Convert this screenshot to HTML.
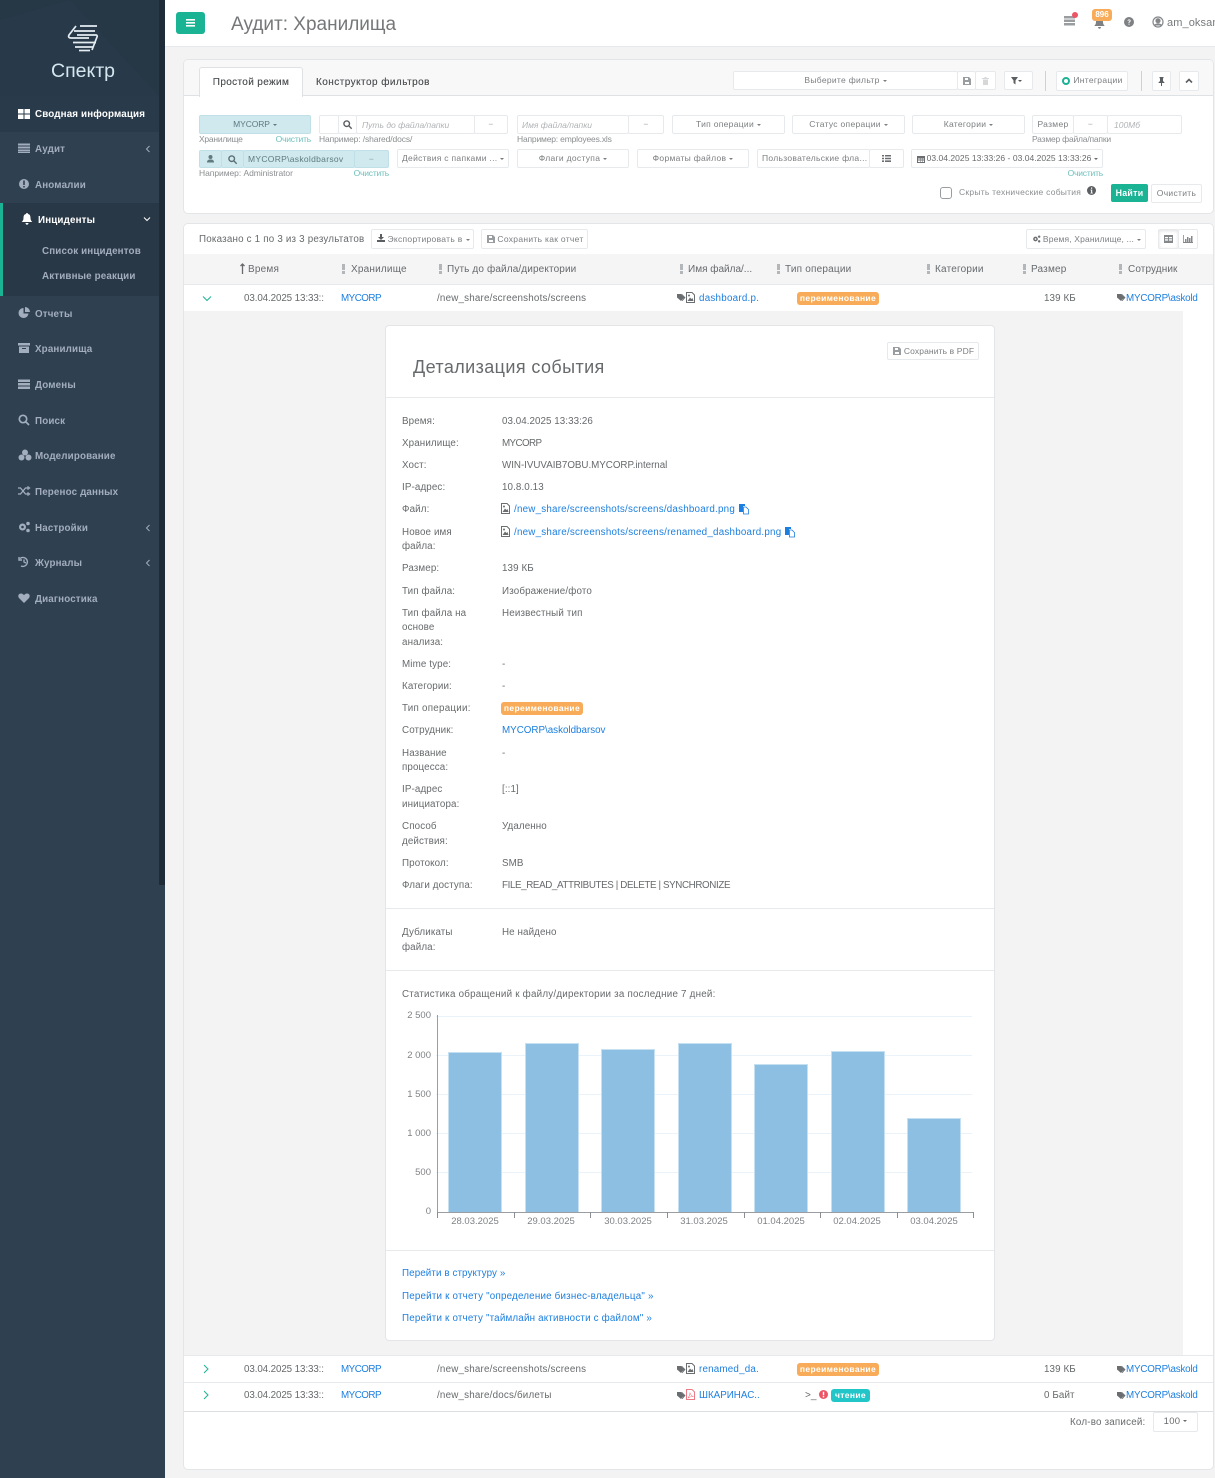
<!DOCTYPE html>
<html lang="ru"><head><meta charset="utf-8"><title>Аудит: Хранилища</title>
<style>
*{box-sizing:border-box}
html,body{margin:0;padding:0}
body{width:1215px;height:1478px;position:relative;overflow:hidden;background:#f3f3f4;font-family:"Liberation Sans",sans-serif;font-size:10px;color:#676a6c}
.t{position:absolute;white-space:nowrap;line-height:14px;height:14px;margin-top:1px}
.b{position:absolute}
.s{font-size:8.5px;letter-spacing:-.12px;color:#8b8e90;margin-top:0}
.c{text-align:center}
.r{text-align:right}
.box{position:absolute;background:#fff;border:1px solid #e7eaec;border-radius:2px;color:#7b7e80;font-size:8.5px;letter-spacing:.3px;line-height:16px;text-align:center;white-space:nowrap;overflow:hidden}
.tl{background:#cfe9ee;border-color:#bfe0e6;color:#5f7a80}
.nav{position:absolute;left:35px;font-weight:bold;font-size:9.8px;letter-spacing:.15px;line-height:14px;color:#a2adbe;white-space:nowrap;margin-top:1px}
.ni{position:absolute;left:18px;width:12px;height:12px;fill:#a2adbe}
.ch{position:absolute;left:145px;width:6px;height:8px;fill:none;stroke:#a2adbe;stroke-width:1}
.car:after{content:"";display:inline-block;border:2px solid transparent;border-top:2.5px solid currentColor;border-bottom:0;margin-left:3px;vertical-align:middle}
.pl{font-style:italic;color:#b0b3b5;letter-spacing:0;line-height:18px}
.h{font-size:10px;letter-spacing:.2px;color:#676a6c;margin-top:2px}
.sd{position:absolute;width:3px;height:10px;top:264px;background:linear-gradient(#b4b7b9 0 6px,transparent 6px 7px,#b4b7b9 7px 10px)}
.d{font-size:9.8px;letter-spacing:.12px;color:#676a6c;margin-top:2px}
.l{color:#1c7fe0}
.bd{position:absolute;border-radius:3px;color:#fff;font-weight:bold;font-size:8.5px;letter-spacing:.35px;line-height:13px;height:13px;text-align:center}
.v{font-size:9.8px;letter-spacing:.1px;margin-top:2px}
.ic{position:absolute;fill:#6b6e70}
.ax{font-size:9.5px;color:#7f8285;letter-spacing:0;margin-top:2px}
.x0{margin-top:0}
svg{display:block;overflow:visible}
</style></head><body>

<!-- SIDEBAR -->
<div class="b" style="left:0;top:0;width:165px;height:1478px;background:#2f4050"></div>
<div class="b" style="left:0;top:0;width:159px;height:96px;background:#263746"></div>
<svg class="b" style="left:0;top:0" width="159" height="96"><polygon points="0,20 70,0 159,96 0,96" fill="#283a4a"/></svg>
<div class="b" style="left:0;top:96px;width:159px;height:36px;background:#293a4a"></div>
<div class="b" style="left:0;top:132px;width:159px;height:71px;background:#2f4050"></div>
<div class="b" style="left:0;top:203px;width:159px;height:93px;background:#293846"></div>
<div class="b" style="left:0;top:203px;width:3px;height:93px;background:#1ab394"></div>
<div class="b" style="left:159px;top:0;width:6px;height:885px;background:#1f2c38"></div>
<svg class="b" style="left:67px;top:24px" width="32" height="28" fill="none" stroke="#e4ecf1" stroke-width="1.7"><path d="M13 2H30"/><path d="M9 2 2 11c-1 2 0 3 2 3"/><path d="M7 7H28"/><path d="M4 14H22"/><path d="M6 18.500H29"/><path d="M8 23H26"/><path d="M12 26.500H23"/><path d="M10 11H29c1 0 1.500 1 1 2l-5 13"/></svg>
<div class="t x0" style="left:51px;top:60px;height:23px;line-height:23px;font-size:19.500px;color:#d6e6ef">Спектр</div>

<svg class="ni" style="top:108px;fill:#fff" viewBox="0 0 12 12"><path d="M0 1h5.500v4.500H0zM6.500 1H12v4.500H6.500zM0 6.500h5.500V11H0zM6.500 6.500H12V11H6.500z"/></svg>
<div class="nav" style="top:107px;color:#fff">Сводная информация</div>
<svg class="ni" style="top:142px" viewBox="0 0 12 12"><path d="M0 1.500h12v2H0zM0 4.500h12v2H0zM0 7.500h12v2H0zM0 10h12v1H0z"/></svg>
<div class="nav" style="top:142px">Аудит</div>
<svg class="ch" style="top:145px" viewBox="0 0 6 8"><path d="M4.500 1 1.500 4l3 3"/></svg>
<svg class="ni" style="top:178px" viewBox="0 0 12 12"><circle cx="6" cy="6" r="5"/><path d="M5.200 2.500h1.600v4.500H5.200zM5.200 8h1.600v1.500H5.200z" fill="#2f4050"/></svg>
<div class="nav" style="top:178px">Аномалии</div>
<svg class="ni" style="left:21px;top:213px;fill:#fff" viewBox="0 0 12 12"><path d="M6 0c.6 0 1 .4 1 1 2 .4 2.500 2 2.500 4 0 2 .8 3 1.800 4H.7c1-1 1.800-2 1.800-4 0-2 .5-3.600 2.500-4 0-.6.400-1 1-1zM4.500 10h3c0 1-.7 1.700-1.500 1.700S4.500 11 4.500 10z"/></svg>
<div class="nav" style="left:38px;top:213px;color:#fff">Инциденты</div>
<svg class="ch" style="left:143px;top:216px;width:8px;height:6px;stroke:#fff" viewBox="0 0 8 6"><path d="M1 1.500l3 3 3-3"/></svg>
<div class="nav" style="left:42px;top:244px">Список инцидентов</div>
<div class="nav" style="left:42px;top:269px">Активные реакции</div>
<svg class="ni" style="top:307px" viewBox="0 0 12 12"><path d="M5.500 1a5 5 0 1 0 5 5.500H5.500zM7 0v5h5a5 5 0 0 0-5-5z"/></svg>
<div class="nav" style="top:307px">Отчеты</div>
<svg class="ni" style="top:342px" viewBox="0 0 12 12"><path d="M0 1h12v2.500H0zM1 4.500h10V11H1zM4 6v1h4V6z" fill-rule="evenodd"/></svg>
<div class="nav" style="top:342px">Хранилища</div>
<svg class="ni" style="top:378px" viewBox="0 0 12 12"><path d="M0 1.500h12v2.500H0zM0 5h12v2.500H0zM0 8.500h12V11H0z"/></svg>
<div class="nav" style="top:378px">Домены</div>
<svg class="ni" style="top:414px;fill:none;stroke:#a2adbe;stroke-width:1.700" viewBox="0 0 12 12"><circle cx="5" cy="5" r="3.700"/><path d="M8 8l3 3"/></svg>
<div class="nav" style="top:414px">Поиск</div>
<svg class="ni" style="top:449px;width:14px" viewBox="0 0 14 12"><circle cx="7" cy="3.500" r="3"/><circle cx="3.500" cy="8.500" r="3"/><circle cx="10.500" cy="8.500" r="3"/></svg>
<div class="nav" style="top:449px">Моделирование</div>
<svg class="ni" style="top:485px;fill:none;stroke:#a2adbe;stroke-width:1.300" viewBox="0 0 12 12"><path d="M0 3h2.500l5 6H10M0 9h2.500l5-6H10M9.500 1.500 11.500 3l-2 1.500M9.500 7.500l2 1.500-2 1.500"/></svg>
<div class="nav" style="top:485px">Перенос данных</div>
<svg class="ni" style="top:521px" viewBox="0 0 12 12"><circle cx="4.500" cy="6" r="3.500"/><circle cx="4.500" cy="6" r="1.300" fill="#2f4050"/><circle cx="10" cy="2.500" r="1.800"/><circle cx="10" cy="9.500" r="1.800"/></svg>
<div class="nav" style="top:521px">Настройки</div>
<svg class="ch" style="top:524px" viewBox="0 0 6 8"><path d="M4.500 1 1.500 4l3 3"/></svg>
<svg class="ni" style="top:556px;fill:none;stroke:#a2adbe;stroke-width:1.400" viewBox="0 0 12 12"><path d="M2 2.500A4.500 4.500 0 1 1 3 10M1 1v3h3M6 3.500V6l2 1"/></svg>
<div class="nav" style="top:556px">Журналы</div>
<svg class="ch" style="top:559px" viewBox="0 0 6 8"><path d="M4.500 1 1.500 4l3 3"/></svg>
<svg class="ni" style="top:592px" viewBox="0 0 12 12"><path d="M6 11 1 6C-.5 4 .5 1.500 3 1.500c1.300 0 2.300.7 3 1.700.7-1 1.700-1.700 3-1.700 2.500 0 3.500 2.500 2 4.500z"/></svg>
<div class="nav" style="top:592px">Диагностика</div>

<!-- TOP BAR -->
<div class="b" style="left:165px;top:0;width:1050px;height:47px;background:#fff;border-bottom:1px solid #e7eaec"></div>
<div class="b" style="left:176px;top:12px;width:29px;height:22px;background:#1ab394;border-radius:3px"></div>
<svg class="b" style="left:186px;top:19px" width="9" height="8" fill="#fff"><path d="M0 0h9v1.600H0zM0 3h9v1.600H0zM0 6h9v1.600H0z"/></svg>
<div class="t" style="left:231px;top:11px;height:26px;line-height:26px;font-size:19px;color:#757779;font-weight:normal">Аудит: Хранилища</div>
<svg class="ic" style="left:1064px;top:16px;fill:#9a9da0" width="12" height="10"><path d="M0 0h11v2.500H0zM0 3.500h11V6H0zM0 7h11v2.500H0z"/></svg>
<div class="b" style="left:1072px;top:12px;width:6px;height:6px;border-radius:50%;background:#ed5565"></div>
<svg class="ic" style="left:1093px;top:17px;fill:#7e8184" width="13" height="12" viewBox="0 0 12 12"><path d="M6 0c.6 0 1 .4 1 1 2 .4 2.500 2 2.500 4 0 2 .8 3 1.800 4H.7c1-1 1.800-2 1.800-4 0-2 .5-3.600 2.500-4 0-.6.400-1 1-1zM4.500 10h3c0 1-.7 1.700-1.500 1.700S4.500 11 4.500 10z"/></svg>
<div class="bd" style="left:1092px;top:9px;width:20px;height:12px;line-height:12px;background:#f8ac59;font-size:8px;letter-spacing:0">896</div>
<svg class="ic" style="left:1124px;top:17px;fill:#7e8184" width="10" height="10" viewBox="0 0 10 10"><circle cx="5" cy="5" r="5"/><path d="M3.500 3.700C3.700 2.800 4.300 2.400 5.100 2.400 6 2.400 6.700 3 6.700 3.800 6.700 5 5.400 5 5.400 6H4.500C4.500 4.500 5.700 4.500 5.700 3.800 5.700 3.400 5.400 3.200 5 3.200 4.600 3.200 4.400 3.500 4.300 3.900zM4.500 6.600h1v1.100h-1z" fill="#fff"/></svg>
<svg class="b" style="left:1152px;top:16px" width="12" height="12" fill="none" stroke="#85888b" stroke-width="1.200"><circle cx="6" cy="6" r="5"/><circle cx="6" cy="4.700" r="2" fill="#85888b"/><path d="M2.700 9.500c1-2 5.600-2 6.600 0" fill="#85888b"/></svg>
<div class="t" style="left:1167px;top:15px;font-size:11px;color:#777a7c;letter-spacing:.1px">am_oksana</div>

<!-- FILTER PANEL -->
<div class="b" style="left:183px;top:59px;width:1031px;height:155px;background:#fff;border:1px solid #e3e6e8;border-radius:5px"></div>
<div class="b" style="left:184px;top:60px;width:1029px;height:36px;background:#f8f8f9;border-bottom:1px solid #dfe2e4;border-radius:4px 4px 0 0"></div>
<div class="b" style="left:199px;top:67px;width:104px;height:30px;background:#fff;border:1px solid #dfe2e4;border-bottom:0;border-radius:3px 3px 0 0"></div>
<div class="t c" style="left:199px;top:75px;width:104px;font-size:10px;color:#505355;letter-spacing:.35px;text-shadow:0 0 .3px #505355">Простой режим</div>
<div class="t" style="left:316px;top:75px;font-size:10px;color:#505355;letter-spacing:.45px;text-shadow:0 0 .3px #505355">Конструктор фильтров</div>
<div class="box car" style="left:733px;top:71px;width:225px;height:19px">Выберите фильтр</div>
<div class="box" style="left:957px;top:71px;width:19px;height:19px"></div>
<div class="box" style="left:975px;top:71px;width:21px;height:19px"></div>
<svg class="ic" style="left:963px;top:77px;fill:#9a9da0" width="8" height="8" viewBox="0 0 8 8"><path d="M0 0h6l2 2v6H0zM2 1v2h3V1zM2 5v2h4V5z" fill-rule="evenodd"/></svg>
<svg class="ic" style="left:982px;top:77px;fill:#d5d7d8" width="7" height="8" viewBox="0 0 7 8"><path d="M0 1h7v1H0zM1 2.500h5V8H1zM2.500 0h2v1h-2z"/></svg>
<div class="box car" style="left:1004px;top:71px;width:29px;height:19px;color:#555"></div>
<svg class="ic" style="left:1011px;top:77px;fill:#5c5f61" width="8" height="8" viewBox="0 0 8 8"><path d="M0 0h7L4.500 3.500V7.500L2.500 6V3.500z"/></svg>
<div class="b" style="left:1045px;top:71px;width:1px;height:20px;background:#cfd2d4"></div>
<div class="box" style="left:1056px;top:71px;width:72px;height:20px;padding-left:12px">Интеграции</div>
<svg class="b" style="left:1062px;top:77px" width="8" height="8"><circle cx="4" cy="4" r="3" fill="none" stroke="#1ab394" stroke-width="2"/></svg>
<div class="b" style="left:1141px;top:71px;width:1px;height:20px;background:#cfd2d4"></div>
<div class="box" style="left:1152px;top:71px;width:19px;height:20px"></div>
<svg class="ic" style="left:1158px;top:77px;fill:#5c5f61" width="7" height="9" viewBox="0 0 7 9"><path d="M1.500 0h4v1l-.5.500V4l1.500 1.500V6H4v3H3V6H.5v-.5L2 4V1.500L1.500 1z"/></svg>
<div class="box" style="left:1179px;top:71px;width:20px;height:20px"></div>
<svg class="b" style="left:1185px;top:78px" width="8" height="6" fill="none" stroke="#5c5f61" stroke-width="1.600"><path d="M1 4.500 4 1.500l3 3"/></svg>

<!-- row 1 -->
<div class="box tl car" style="left:199px;top:115px;width:112px;height:19px;letter-spacing:-.1px">MYCORP</div>
<div class="t s" style="left:199px;top:132px;letter-spacing:-.25px">Хранилище</div>
<div class="t s r" style="left:251px;top:132px;width:60px;color:#6fc0bd;letter-spacing:-.2px">Очистить</div>
<div class="box" style="left:319px;top:115px;width:20px;height:19px"></div>
<div class="box" style="left:338px;top:115px;width:19px;height:19px"></div>
<svg class="b" style="left:343px;top:120px" width="9" height="9" fill="none" stroke="#5c5f61" stroke-width="1.400"><circle cx="3.700" cy="3.700" r="2.800"/><path d="M6 6l2.700 2.700"/></svg>
<div class="box pl" style="left:356px;top:115px;width:119px;height:19px;text-align:left;padding-left:5px;color:#b0b3b5">Путь до файла/папки</div>
<div class="box" style="left:474px;top:115px;width:34px;height:19px;color:#aaa">−</div>
<div class="t s" style="left:319px;top:132px">Например: /shared/docs/</div>
<div class="box pl" style="left:517px;top:115px;width:112px;height:19px;text-align:left;padding-left:4px;color:#b0b3b5">Имя файла/папки</div>
<div class="box" style="left:628px;top:115px;width:36px;height:19px;color:#aaa">−</div>
<div class="t s" style="left:517px;top:132px;letter-spacing:-.18px">Например: employees.xls</div>
<div class="box car" style="left:672px;top:115px;width:113px;height:19px">Тип операции</div>
<div class="box car" style="left:792px;top:115px;width:113px;height:19px">Статус операции</div>
<div class="box car" style="left:912px;top:115px;width:113px;height:19px">Категории</div>
<div class="box" style="left:1032px;top:115px;width:42px;height:19px">Размер</div>
<div class="box" style="left:1073px;top:115px;width:35px;height:19px;color:#aaa">−</div>
<div class="box pl" style="left:1107px;top:115px;width:75px;height:19px;text-align:left;padding-left:6px;color:#b0b3b5">100Мб</div>
<div class="t s" style="left:1032px;top:132px;letter-spacing:-.2px">Размер файла/папки</div>

<!-- row 2 -->
<div class="box tl" style="left:199px;top:150px;width:23px;height:18px"></div>
<svg class="ic" style="left:207px;top:155px;fill:#5f7a80" width="7" height="8" viewBox="0 0 7 8"><circle cx="3.500" cy="2" r="2"/><path d="M0 7.500C0 5 1.500 4.500 3.500 4.500S7 5 7 7.500z"/></svg>
<div class="box tl" style="left:221px;top:150px;width:23px;height:18px"></div>
<svg class="b" style="left:228px;top:155px" width="9" height="9" fill="none" stroke="#5c6f74" stroke-width="1.400"><circle cx="3.700" cy="3.700" r="2.800"/><path d="M6 6l2.700 2.700"/></svg>
<div class="box tl" style="left:243px;top:150px;width:112px;height:18px;text-align:left;padding-left:4px;line-height:16px">MYCORP\askoldbarsov</div>
<div class="box tl" style="left:354px;top:150px;width:35px;height:18px;color:#8aa">−</div>
<div class="t s" style="left:199px;top:166px;letter-spacing:-.05px">Например: Administrator</div>
<div class="t s r" style="left:329px;top:166px;width:60px;color:#6fc0bd;letter-spacing:-.2px">Очистить</div>
<div class="box" style="left:397px;top:149px;width:112px;height:19px;text-align:left;padding-left:4px">Действия с папками ...</div>
<div class="b" style="left:500px;top:158px;border:2px solid transparent;border-top:2.500px solid #77797b;border-bottom:0"></div>
<div class="box car" style="left:517px;top:149px;width:112px;height:19px">Флаги доступа</div>
<div class="box car" style="left:637px;top:149px;width:112px;height:19px">Форматы файлов</div>
<div class="box" style="left:757px;top:149px;width:113px;height:19px;text-align:left;padding-left:4px">Пользовательские фла...</div>
<div class="box" style="left:869px;top:149px;width:35px;height:19px"></div>
<svg class="ic" style="left:882px;top:155px" width="9" height="7" viewBox="0 0 9 7"><path d="M0 0h2v1.500H0zM3 0h6v1.500H3zM0 2.700h2v1.500H0zM3 2.700h6v1.500H3zM0 5.400h2V7H0zM3 5.400h6V7H3z"/></svg>
<div class="box car" style="left:911px;top:149px;width:192px;height:19px;padding-left:11px;color:#676a6c;letter-spacing:.03px">03.04.2025 13:33:26 - 03.04.2025 13:33:26</div>
<svg class="ic" style="left:917px;top:155px" width="8" height="8" viewBox="0 0 8 8"><path d="M0 1h8v7H0zM1 3v4h6V3z" fill-rule="evenodd"/><path d="M1 3.500h6v1H1zM1 5.500h6v.5H1zM3 3h.5v4H3zM5 3h.5v4H5z"/></svg>
<div class="t s r" style="left:1043px;top:166px;width:60px;color:#6fc0bd;letter-spacing:-.2px">Очистить</div>
<div class="b" style="left:940px;top:187px;width:12px;height:12px;border:1px solid #9a9da0;border-radius:3px;background:#fff"></div>
<div class="t s" style="left:959px;top:185px;letter-spacing:.25px">Скрыть технические события</div>
<svg class="ic" style="left:1087px;top:186px;fill:#5c5f61" width="9" height="9" viewBox="0 0 9 9"><circle cx="4.500" cy="4.500" r="4.500"/><path d="M4 1.500h1.200v1.300H4zM3.500 3.600h1.700V6.700h.6v.8H3.500v-.8h.6V4.400h-.6z" fill="#fff"/></svg>
<div class="b" style="left:1111px;top:184px;width:37px;height:18px;background:#1ab394;border-radius:2px;color:#fff;font-weight:bold;font-size:8.800px;letter-spacing:.3px;line-height:18px;text-align:center">Найти</div>
<div class="box" style="left:1151px;top:184px;width:51px;height:19px">Очистить</div>

<!-- TABLE PANEL -->
<div class="b" style="left:183px;top:223px;width:1031px;height:1247px;background:#fff;border:1px solid #e3e6e8;border-radius:5px"></div>
<div class="t" style="left:199px;top:232px;font-size:9.800px;letter-spacing:.2px">Показано с 1 по 3 из 3 результатов</div>
<div class="box" style="left:371px;top:229px;width:103px;height:20px;padding-left:12px;line-height:18px;">Экспортировать в<span class="car"></span></div>
<svg class="ic" style="left:377px;top:234px;fill:#5c5f61" width="8" height="8" viewBox="0 0 8 8"><path d="M3 0h2v3h2L4 6 1 3h2zM0 6h8v2H0z"/></svg>
<div class="box" style="left:481px;top:229px;width:107px;height:20px;padding-left:12px;line-height:18px">Сохранить как отчет</div>
<svg class="ic" style="left:487px;top:235px;fill:#9a9da0" width="8" height="8" viewBox="0 0 8 8"><path d="M0 0h6l2 2v6H0zM2 1v2h3V1zM2 5v2h4V5z" fill-rule="evenodd"/></svg>
<div class="box car" style="left:1026px;top:229px;width:120px;height:20px;padding-left:12px;line-height:18px;letter-spacing:.15px">Время, Хранилище, ...</div>
<svg class="ic" style="left:1032px;top:235px" width="9" height="8" viewBox="0 0 12 12"><circle cx="4.500" cy="6" r="3.500"/><circle cx="4.500" cy="6" r="1.300" fill="#fff"/><circle cx="10" cy="2.500" r="1.800"/><circle cx="10" cy="9.500" r="1.800"/></svg>
<div class="box" style="left:1158px;top:229px;width:21px;height:20px;box-shadow:inset 0 1px 3px rgba(0,0,0,.12)"></div>
<svg class="ic" style="left:1164px;top:235px;fill:#85888b" width="9" height="8" viewBox="0 0 9 8"><path d="M0 0h9v8H0zM1 2v1.300h3V2zM5 2v1.300h3V2zM1 4.300v1.300h3V4.300zM5 4.300v1.300h3V4.300z" fill-rule="evenodd"/></svg>
<div class="box" style="left:1178px;top:229px;width:20px;height:20px"></div>
<svg class="ic" style="left:1183px;top:235px;fill:#85888b" width="10" height="8" viewBox="0 0 10 8"><path d="M0 0h.8v7H10v1H0zM2 4h1.500v3H2zM4 2h1.500v5H4zM6 3h1.500v4H6zM8 1h1.500v6H8z"/></svg>

<div class="b" style="left:184px;top:254px;width:1029px;height:31px;background:#f5f5f6;border-bottom:1px solid #e7eaec"></div>
<svg class="b" style="left:240px;top:263px" width="5" height="11" fill="none" stroke="#676a6c" stroke-width="1.300"><path d="M2.500 11V1M.5 3 2.500 1l2 2"/></svg>
<div class="t h" style="left:248px;top:261px">Время</div>
<div class="sd" style="left:342px"></div><div class="t h" style="left:351px;top:261px">Хранилище</div>
<div class="sd" style="left:439px"></div><div class="t h" style="left:447px;top:261px;letter-spacing:.13px">Путь до файла/директории</div>
<div class="sd" style="left:680px"></div><div class="t h" style="left:688px;top:261px;letter-spacing:0">Имя файла/...</div>
<div class="sd" style="left:777px"></div><div class="t h" style="left:785px;top:261px">Тип операции</div>
<div class="sd" style="left:927px"></div><div class="t h" style="left:935px;top:261px">Категории</div>
<div class="sd" style="left:1023px"></div><div class="t h" style="left:1031px;top:261px">Размер</div>
<div class="sd" style="left:1119px"></div><div class="t h" style="left:1128px;top:261px;letter-spacing:.1px">Сотрудник</div>

<!-- row 1 -->
<svg class="b" style="left:202px;top:295px" width="10" height="7" fill="none" stroke="#1ab394" stroke-width="1"><path d="M1 1.500 5 5.500 9 1.500"/></svg>
<div class="t d" style="left:244px;top:290px;letter-spacing:-.1px">03.04.2025 13:33::</div>
<div class="t d l" style="left:341px;top:290px;letter-spacing:-.5px">MYCORP</div>
<div class="t d" style="left:437px;top:290px;letter-spacing:.2px">/new_share/screenshots/screens</div>
<svg class="ic" style="left:677px;top:294px" width="9" height="7" viewBox="0 0 9 7"><path d="M0 0h4l3 3.500L4 7 0 3.500zM5 0l3.500 3.500L5.500 7l-.8-.3L7 3.500 4.200 0z"/></svg>
<svg class="b" style="left:686px;top:292px" width="9" height="11" fill="none" stroke="#6b6e70"><path d="M.5.500h5.500l2.500 2.500v7.500H.5z"/><path d="M1.500 9 4 5.500l1.500 1.500L6.500 6l1 3z" fill="#6b6e70" stroke="none"/><circle cx="3" cy="3.500" r="1" fill="#6b6e70" stroke="none"/></svg>
<div class="t d l" style="left:699px;top:290px;letter-spacing:.25px">dashboard.p.</div>
<div class="bd" style="left:797px;top:292px;width:82px;background:#f8ac59">переименование</div>
<div class="t d" style="left:1044px;top:290px;letter-spacing:.1px">139 КБ</div>
<svg class="ic" style="left:1117px;top:294px" width="9" height="7" viewBox="0 0 9 7"><path d="M0 0h4l3 3.500L4 7 0 3.500zM5 0l3.500 3.500L5.500 7l-.8-.3L7 3.500 4.200 0z"/></svg>
<div class="t d l" style="left:1126px;top:290px;letter-spacing:-.18px">MYCORP\askold</div>

<!-- EXPANDED -->
<div class="b" style="left:184px;top:311px;width:999px;height:1045px;background:#f3f3f4"></div>
<div class="b" style="left:184px;top:1355px;width:1029px;height:1px;background:#e7eaec"></div>
<div class="b" style="left:385px;top:325px;width:610px;height:1016px;background:#fff;border:1px solid #e3e5e8;border-radius:4px"></div>
<div class="t x0" style="left:413px;top:355px;height:24px;line-height:24px;font-size:18px;color:#676a6c;letter-spacing:.4px">Детализация события</div>
<div class="box" style="left:887px;top:342px;width:92px;height:18px;padding-left:12px;line-height:16px;letter-spacing:.12px">Сохранить в PDF</div>
<svg class="ic" style="left:893px;top:347px;fill:#9a9da0" width="8" height="8" viewBox="0 0 8 8"><path d="M0 0h6l2 2v6H0zM2 1v2h3V1zM2 5v2h4V5z" fill-rule="evenodd"/></svg>
<div class="b" style="left:386px;top:397px;width:608px;height:1px;background:#e7eaec"></div>
<div class="b" style="left:386px;top:908px;width:608px;height:1px;background:#e7eaec"></div>
<div class="b" style="left:386px;top:970px;width:608px;height:1px;background:#e7eaec"></div>
<div class="b" style="left:386px;top:1250px;width:608px;height:1px;background:#e7eaec"></div>

<div class="t d" style="left:402px;top:413px">Время:</div><div class="t v" style="left:502px;top:413px;letter-spacing:.05px">03.04.2025 13:33:26</div>
<div class="t d" style="left:402px;top:435px">Хранилище:</div><div class="t v" style="left:502px;top:435px;letter-spacing:-.6px">MYCORP</div>
<div class="t d" style="left:402px;top:457px">Хост:</div><div class="t v" style="left:502px;top:457px;letter-spacing:-.03px">WIN-IVUVAIB7OBU.MYCORP.internal</div>
<div class="t d" style="left:402px;top:479px">IP-адрес:</div><div class="t v" style="left:502px;top:479px">10.8.0.13</div>
<div class="t d" style="left:402px;top:501px">Файл:</div>
<svg class="b" style="left:501px;top:503px" width="9" height="11" fill="none" stroke="#6b6e70"><path d="M.5.500h5.500l2.500 2.500v7.500H.5z"/><path d="M1.500 9 4 5.500l1.500 1.500L6.500 6l1 3z" fill="#6b6e70" stroke="none"/><circle cx="3" cy="3.500" r="1" fill="#6b6e70" stroke="none"/></svg>
<div class="t v l" style="left:514px;top:501px;letter-spacing:.22px">/new_share/screenshots/screens/dashboard.png</div>
<svg class="b" style="left:739px;top:504px" width="10" height="10" fill="#1c7fe0"><path d="M0 0h6v2H4v6H0z"/><path d="M4.500 3H7l2.500 2.500V10h-5z" fill="#fff" stroke="#1c7fe0" stroke-width=".8"/></svg>
<div class="t d" style="left:402px;top:524px">Новое имя</div><div class="t d" style="left:402px;top:538px">файла:</div>
<svg class="b" style="left:501px;top:526px" width="9" height="11" fill="none" stroke="#6b6e70"><path d="M.5.500h5.500l2.500 2.500v7.500H.5z"/><path d="M1.500 9 4 5.500l1.500 1.500L6.500 6l1 3z" fill="#6b6e70" stroke="none"/><circle cx="3" cy="3.500" r="1" fill="#6b6e70" stroke="none"/></svg>
<div class="t v l" style="left:514px;top:524px;letter-spacing:.23px">/new_share/screenshots/screens/renamed_dashboard.png</div>
<svg class="b" style="left:785px;top:527px" width="10" height="10" fill="#1c7fe0"><path d="M0 0h6v2H4v6H0z"/><path d="M4.500 3H7l2.500 2.500V10h-5z" fill="#fff" stroke="#1c7fe0" stroke-width=".8"/></svg>
<div class="t d" style="left:402px;top:560px">Размер:</div><div class="t v" style="left:502px;top:560px">139 КБ</div>
<div class="t d" style="left:402px;top:583px">Тип файла:</div><div class="t v" style="left:502px;top:583px;letter-spacing:.15px">Изображение/фото</div>
<div class="t d" style="left:402px;top:605px">Тип файла на</div><div class="t d" style="left:402px;top:619px">основе</div><div class="t d" style="left:402px;top:634px">анализа:</div><div class="t v" style="left:502px;top:605px;letter-spacing:.15px">Неизвестный тип</div>
<div class="t d" style="left:402px;top:656px">Mime type:</div><div class="t v" style="left:502px;top:656px">-</div>
<div class="t d" style="left:402px;top:678px">Категории:</div><div class="t v" style="left:502px;top:678px">-</div>
<div class="t d" style="left:402px;top:700px;letter-spacing:.25px">Тип операции:</div><div class="bd" style="left:501px;top:702px;width:82px;background:#f8ac59">переименование</div>
<div class="t d" style="left:402px;top:722px">Сотрудник:</div><div class="t v l" style="left:502px;top:722px;letter-spacing:0">MYCORP\askoldbarsov</div>
<div class="t d" style="left:402px;top:745px">Название</div><div class="t d" style="left:402px;top:759px">процесса:</div><div class="t v" style="left:502px;top:745px">-</div>
<div class="t d" style="left:402px;top:781px">IP-адрес</div><div class="t d" style="left:402px;top:796px">инициатора:</div><div class="t v" style="left:502px;top:781px">[::1]</div>
<div class="t d" style="left:402px;top:818px">Способ</div><div class="t d" style="left:402px;top:833px">действия:</div><div class="t v" style="left:502px;top:818px">Удаленно</div>
<div class="t d" style="left:402px;top:855px">Протокол:</div><div class="t v" style="left:502px;top:855px">SMB</div>
<div class="t d" style="left:402px;top:877px">Флаги доступа:</div><div class="t v" style="left:502px;top:877px;letter-spacing:-.38px">FILE_READ_ATTRIBUTES | DELETE | SYNCHRONIZE</div>
<div class="t d" style="left:402px;top:924px">Дубликаты</div><div class="t d" style="left:402px;top:939px">файла:</div><div class="t v" style="left:502px;top:924px">Не найдено</div>
<div class="t d" style="left:402px;top:986px;letter-spacing:.22px">Статистика обращений к файлу/директории за последние 7 дней:</div>

<!-- CHART -->
<svg class="b" style="left:386px;top:1000px" width="600" height="240">
<g fill="none" stroke="#eaf2fa"><path d="M50 16.500H586M50 55.500H586M50 94.500H586M50 133.500H586M50 172.500H586"/></g>
<g fill="#8cbfe1" stroke="#c5e0f1">
<rect x="62.500" y="52.500" width="53" height="160"/><rect x="139.500" y="43.500" width="53" height="169"/><rect x="215.500" y="49.500" width="53" height="163"/><rect x="292.500" y="43.500" width="53" height="169"/><rect x="368.500" y="64.500" width="53" height="148"/><rect x="445.500" y="51.500" width="53" height="161"/><rect x="521.500" y="118.500" width="53" height="94"/>
</g>
<path d="M51.500 15V212.500H587" fill="none" stroke="#9a9da1"/>
<path d="M51.500 212V218M128.500 212V218M204.500 212V218M281.500 212V218M358.500 212V218M434.500 212V218M511.500 212V218M587.500 212V218" stroke="#8a8d91" fill="none"/>
</svg>
<div class="t r ax" style="left:395px;top:1007px;width:36px">2 500</div>
<div class="t r ax" style="left:395px;top:1047px;width:36px">2 000</div>
<div class="t r ax" style="left:395px;top:1086px;width:36px">1 500</div>
<div class="t r ax" style="left:395px;top:1125px;width:36px">1 000</div>
<div class="t r ax" style="left:395px;top:1164px;width:36px">500</div>
<div class="t r ax" style="left:395px;top:1203px;width:36px">0</div>
<div class="t c ax x0" style="left:445px;top:1215px;width:60px">28.03.2025</div>
<div class="t c ax x0" style="left:521px;top:1215px;width:60px">29.03.2025</div>
<div class="t c ax x0" style="left:598px;top:1215px;width:60px">30.03.2025</div>
<div class="t c ax x0" style="left:674px;top:1215px;width:60px">31.03.2025</div>
<div class="t c ax x0" style="left:751px;top:1215px;width:60px">01.04.2025</div>
<div class="t c ax x0" style="left:827px;top:1215px;width:60px">02.04.2025</div>
<div class="t c ax x0" style="left:904px;top:1215px;width:60px">03.04.2025</div>

<div class="t v l" style="left:402px;top:1265px">Перейти в структуру »</div>
<div class="t v l" style="left:402px;top:1288px;letter-spacing:.2px">Перейти к отчету "определение бизнес-владельца" »</div>
<div class="t v l" style="left:402px;top:1310px;letter-spacing:.19px">Перейти к отчету "таймлайн активности с файлом" »</div>

<!-- rows 2, 3 -->
<svg class="b" style="left:203px;top:1364px" width="6" height="10" fill="none" stroke="#1ab394" stroke-width="1"><path d="M1 1l4 4-4 4"/></svg>
<div class="t d" style="left:244px;top:1361px;letter-spacing:-.1px">03.04.2025 13:33::</div>
<div class="t d l" style="left:341px;top:1361px;letter-spacing:-.5px">MYCORP</div>
<div class="t d" style="left:437px;top:1361px;letter-spacing:.2px">/new_share/screenshots/screens</div>
<svg class="ic" style="left:677px;top:1366px" width="9" height="7" viewBox="0 0 9 7"><path d="M0 0h4l3 3.500L4 7 0 3.500zM5 0l3.500 3.500L5.500 7l-.8-.3L7 3.500 4.200 0z"/></svg>
<svg class="b" style="left:686px;top:1363px" width="9" height="11" fill="none" stroke="#6b6e70"><path d="M.5.500h5.500l2.500 2.500v7.500H.5z"/><path d="M1.500 9 4 5.500l1.500 1.500L6.500 6l1 3z" fill="#6b6e70" stroke="none"/><circle cx="3" cy="3.500" r="1" fill="#6b6e70" stroke="none"/></svg>
<div class="t d l" style="left:699px;top:1361px;letter-spacing:.2px">renamed_da.</div>
<div class="bd" style="left:797px;top:1363px;width:82px;background:#f8ac59">переименование</div>
<div class="t d" style="left:1044px;top:1361px;letter-spacing:.1px">139 КБ</div>
<svg class="ic" style="left:1117px;top:1366px" width="9" height="7" viewBox="0 0 9 7"><path d="M0 0h4l3 3.500L4 7 0 3.500zM5 0l3.500 3.500L5.500 7l-.8-.3L7 3.500 4.200 0z"/></svg>
<div class="t d l" style="left:1126px;top:1361px;letter-spacing:-.18px">MYCORP\askold</div>
<div class="b" style="left:184px;top:1382px;width:1029px;height:1px;background:#e7eaec"></div>

<svg class="b" style="left:203px;top:1390px" width="6" height="10" fill="none" stroke="#1ab394" stroke-width="1"><path d="M1 1l4 4-4 4"/></svg>
<div class="t d" style="left:244px;top:1387px;letter-spacing:-.1px">03.04.2025 13:33::</div>
<div class="t d l" style="left:341px;top:1387px;letter-spacing:-.5px">MYCORP</div>
<div class="t d" style="left:437px;top:1387px;letter-spacing:.2px">/new_share/docs/билеты</div>
<svg class="ic" style="left:677px;top:1392px" width="9" height="7" viewBox="0 0 9 7"><path d="M0 0h4l3 3.500L4 7 0 3.500zM5 0l3.500 3.500L5.500 7l-.8-.3L7 3.500 4.200 0z"/></svg>
<svg class="b" style="left:686px;top:1389px" width="9" height="11" fill="none" stroke="#ed7b85"><path d="M.5.500h5.500l2.500 2.500v7.500H.5z"/><path d="M2 9C3.500 7 4 5 4 3.500 4.500 6 5.500 7 7.500 7.500 5.500 7.500 3.500 8 2 9z" stroke-width=".6"/></svg>
<div class="t d l" style="left:699px;top:1387px;letter-spacing:0">ШКАРИНАС..</div>
<div class="t" style="left:805px;top:1388px;font-size:10px;color:#676a6c">&gt;_</div>
<svg class="b" style="left:819px;top:1390px" width="9" height="9"><circle cx="4.500" cy="4.500" r="4.500" fill="#ed5565"/><path d="M3.800 1.800h1.400v3.500H3.800zM3.800 6h1.400v1.400H3.800z" fill="#fff"/></svg>
<div class="bd" style="left:831px;top:1389px;width:39px;background:#23c6c8">чтение</div>
<div class="t d" style="left:1044px;top:1387px;letter-spacing:.1px">0 Байт</div>
<svg class="ic" style="left:1117px;top:1392px" width="9" height="7" viewBox="0 0 9 7"><path d="M0 0h4l3 3.500L4 7 0 3.500zM5 0l3.500 3.500L5.500 7l-.8-.3L7 3.500 4.200 0z"/></svg>
<div class="t d l" style="left:1126px;top:1387px;letter-spacing:-.18px">MYCORP\askold</div>
<div class="b" style="left:184px;top:1411px;width:1029px;height:1px;background:#dcdfe1"></div>

<div class="t d" style="left:1070px;top:1414px;letter-spacing:.2px">Кол-во записей:</div>
<div class="box car" style="left:1153px;top:1412px;width:45px;height:20px;line-height:18px;font-size:9.500px;color:#676a6c">100</div>

</body></html>
